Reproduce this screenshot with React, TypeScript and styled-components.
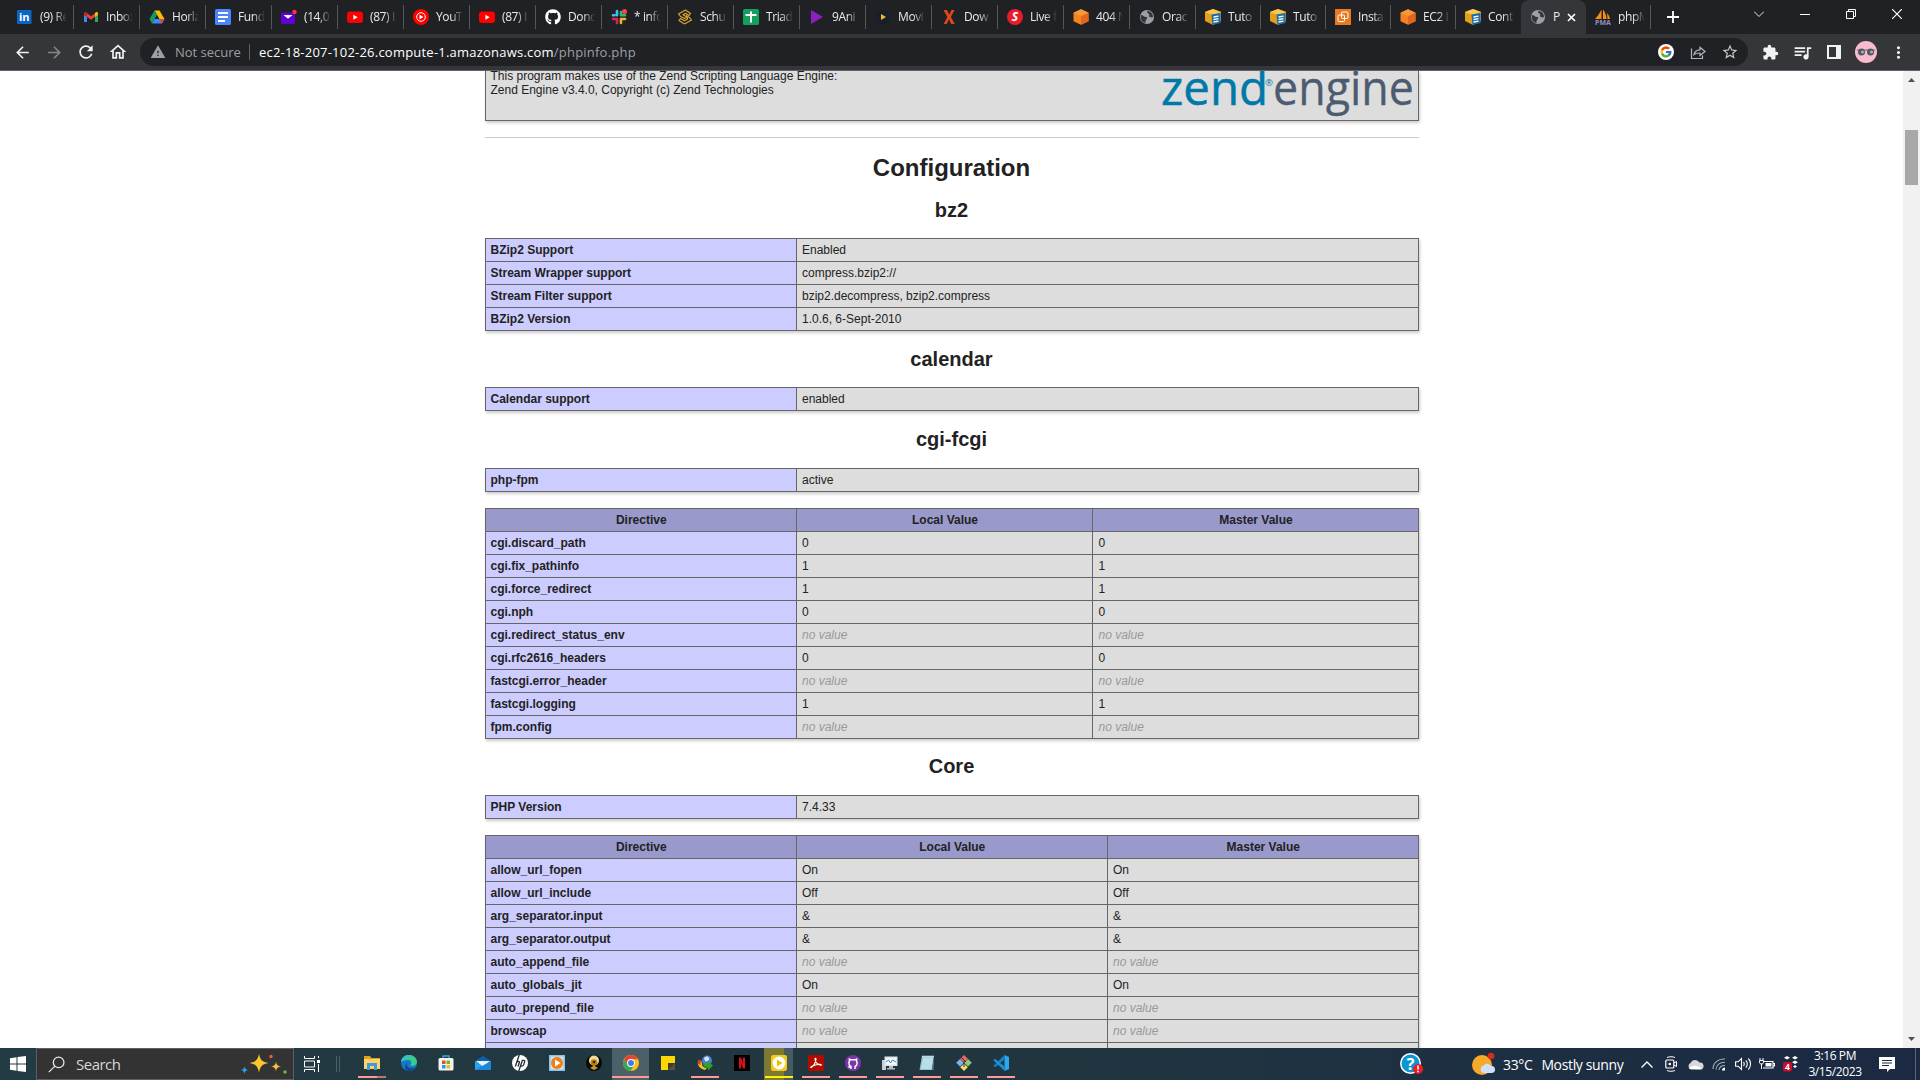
import React from "react";
import styled, { createGlobalStyle } from "styled-components";
import { FaGithub } from "react-icons/fa";
import { FcGoogle } from "react-icons/fc";
import {
  MdArrowBack,
  MdArrowForward,
  MdExtension,
  MdMoreVert,
  MdOutlineHome,
  MdQueueMusic,
  MdRefresh,
  MdStarBorder,
  MdWarning,
} from "react-icons/md";

const uiFont = `"Segoe UI", "Open Sans", "Noto Sans", sans-serif`;

const GlobalStyle = createGlobalStyle`
  * { box-sizing: border-box; }
  body { margin: 0; background: #fff; overflow: hidden; }
`;

const Screen = styled.div`
  width: 1920px;
  height: 1080px;
  display: flex;
  flex-direction: column;
  overflow: hidden;
`;

/* ---------- browser chrome ---------- */

const TabStrip = styled.header`
  height: 34px;
  flex: none;
  background: #202124;
  display: flex;
  padding-left: 8px;
  font-family: ${uiFont};
`;

const Tab = styled.div<{ $active?: boolean; $w: number }>`
  width: ${(p) => p.$w}px;
  height: 34px;
  flex: none;
  display: flex;
  align-items: center;
  padding-left: 9px;
  border-radius: 8px 8px 0 0;
  background: ${(p) => (p.$active ? "#35363a" : "transparent")};
`;

const Favicon = styled.span`
  width: 16px;
  height: 16px;
  flex: none;
  display: flex;
  svg { width: 16px; height: 16px; }
`;

const TabTitle = styled.span<{ $short?: boolean }>`
  width: ${(p) => (p.$short ? "7px" : "27px")};
  margin-left: 7px;
  overflow: hidden;
  white-space: pre;
  font-size: 12px;
  line-height: 20px;
  letter-spacing: -0.4px;
  color: #e8eaed;
  mask-image: ${(p) =>
    p.$short ? "none" : "linear-gradient(90deg, #000 55%, transparent 100%)"};
`;

const TabDivider = styled.span`
  width: 1px;
  height: 24px;
  margin-left: auto;
  background: #55575b;
`;

const TabClose = styled.span`
  display: flex;
  margin-left: 7px;
`;

const NewTab = styled.div`
  width: 44px;
  display: flex;
  align-items: center;
  justify-content: center;
`;

const WindowControls = styled.div`
  margin-left: auto;
  display: flex;
  height: 28px;
`;

const WindowButton = styled.div`
  width: 46px;
  display: flex;
  align-items: center;
  justify-content: center;
`;

const Toolbar = styled.div`
  height: 37px;
  flex: none;
  display: flex;
  align-items: center;
  background: #35363a;
  border-bottom: 1px solid #655f68;
  padding: 0 6px;
  font-family: ${uiFont};
`;

const ToolButton = styled.span<{ $dim?: boolean }>`
  width: 32px;
  height: 28px;
  flex: none;
  display: flex;
  align-items: center;
  justify-content: center;
  color: ${(p) => (p.$dim ? "#85878b" : "#f1f3f4")};
`;

const AddressBar = styled.div`
  width: 1608px;
  height: 28px;
  margin-left: 6px;
  flex: none;
  display: flex;
  align-items: center;
  border-radius: 14px;
  background: #202124;
  padding-left: 10px;
  padding-right: 2px;
`;

const Insecure = styled.span`
  display: flex;
  align-items: center;
  gap: 9px;
  width: 99px;
  font-size: 13px;
  letter-spacing: -0.02px;
  color: #9aa0a6;
  white-space: nowrap;
`;

const AddressDivider = styled.span`
  width: 1px;
  height: 16px;
  background: #5f6368;
`;

const Url = styled.span`
  margin-left: 9px;
  font-size: 13px;
  letter-spacing: 0.22px;
  color: #fff;
  white-space: nowrap;
`;

const UrlPath = styled.span`
  color: #9aa0a6;
`;

const AddressActions = styled.span`
  display: flex;
  margin-left: auto;
`;

const ExtensionRow = styled.div`
  display: flex;
  margin-left: 6px;
`;

const Profile = styled(ToolButton)`
  svg { width: 22px; height: 22px; }
`;

/* ---------- phpinfo page ---------- */

const Viewport = styled.div`
  height: 977px;
  flex: none;
  display: flex;
  overflow: hidden;
  background: #fff;
`;

const Page = styled.main`
  width: 1903px;
  display: flex;
  flex-direction: column;
  align-items: center;
  font-family: "Liberation Sans", Arial, sans-serif;
  color: #222;
`;

const EngineBox = styled.section`
  width: 934px;
  height: 50px;
  flex: none;
  display: flex;
  justify-content: space-between;
  padding: 0 2px 0 5px;
  background: #ddd;
  border: 1px solid #666;
  border-top: 0;
  box-shadow: 1px 2px 3px #ccc;
  overflow: hidden;
`;

const EngineText = styled.p`
  margin: -2px 0 0;
  font-size: 12px;
  line-height: 14px;
`;

const Rule = styled.hr`
  width: 934px;
  height: 1px;
  flex: none;
  margin: 16px 0 0;
  border: 0;
  background: #ccc;
`;

const Title = styled.h1`
  margin: 16px 0 0;
  font-size: 24px;
  line-height: 28px;
  font-weight: 700;
`;

const SectionTitle = styled.h2`
  margin: 16.6px 0;
  font-size: 20px;
  line-height: 23px;
  font-weight: 700;
`;

const Table = styled.table<{ $gap?: boolean }>`
  width: 934px;
  flex: none;
  margin-top: ${(p) => (p.$gap ? "16px" : "0")};
  table-layout: fixed;
  border-collapse: collapse;
  box-shadow: 1px 2px 3px #ccc;
`;

const Col = styled.col<{ $w?: number }>`
  width: ${(p) => (p.$w ? `${p.$w}px` : "auto")};
`;

const Cell = styled.td`
  height: 23px;
  padding: 4px 4px 4px 5.5px;
  border: 1px solid #666;
  font-size: 12px;
  line-height: 14px;
  background: #ddd;
`;

const NameCell = styled(Cell)`
  padding: 4px 5px;
  background: #ccf;
  font-weight: 700;
`;

const HeadCell = styled(Cell)`
  background: #99c;
  font-weight: 700;
  text-align: center;
`;

const NoValue = styled.i`
  color: #999;
`;

const Scrollbar = styled.div`
  width: 17px;
  display: flex;
  flex-direction: column;
  align-items: center;
  justify-content: space-between;
  background: #f1f1f1;
`;

const ScrollArrow = styled.span<{ $down?: boolean }>`
  width: 17px;
  height: 17px;
  flex: none;
  display: flex;
  align-items: center;
  justify-content: center;
  transform: ${(p) => (p.$down ? "rotate(180deg)" : "none")};
`;

const ScrollThumb = styled.span`
  width: 13px;
  height: 55px;
  margin: 42px 0 auto;
  background: #a8a8a8;
`;

/* ---------- taskbar ---------- */

const Taskbar = styled.footer`
  height: 32px;
  flex: none;
  display: flex;
  background: linear-gradient(90deg, #233b43 0%, #21353f 55%, #1d2f42 78%, #1b2943 100%);
  font-family: ${uiFont};
  color: #fff;
`;

const StartButton = styled.div`
  width: 36px;
  display: flex;
  align-items: center;
  justify-content: center;
`;

const SearchBox = styled.div`
  width: 258px;
  display: flex;
  align-items: center;
  padding: 0 5px 0 11px;
  background: #333;
  border: 1px solid #625d5f;
  color: #d6d6d6;
  font-size: 15px;
  letter-spacing: -0.5px;
`;

const SearchLabel = styled.span`
  margin-left: 11px;
  margin-right: auto;
`;

const TaskView = styled.div`
  width: 36px;
  display: flex;
  align-items: center;
  justify-content: center;
`;

const Grip = styled.div`
  width: 4px;
  height: 16px;
  margin: 8px 13px 0 6px;
  border: solid #4c6067;
  border-width: 0 1px;
`;

type RunState = "none" | "open" | "stacked" | "focused" | "alert";

const AppSlot = styled.div<{ $state: RunState }>`
  width: 37px;
  height: 32px;
  flex: none;
  display: flex;
  flex-direction: column;
  align-items: center;
  justify-content: space-between;
  padding: 7px 0 2px;
  background: ${(p) =>
    p.$state === "focused"
      ? "#4c6067"
      : p.$state === "alert"
      ? "linear-gradient(90deg, transparent 4px, #7c7935 4px 24px, #465a60 24px 33px, transparent 33px)"
      : "transparent"};
  svg { width: 16px; height: 16px; }
`;

const RunMark = styled.span<{ $state: RunState }>`
  width: ${(p) => (p.$state === "focused" ? "37px" : "28px")};
  height: 2px;
  background: ${(p) =>
    ({
      none: "transparent",
      open: "#ff9a98",
      focused: "#ff9a98",
      alert: "#fff100",
      stacked: "linear-gradient(90deg, #ff9a98 19px, #b97778 19px)",
    }[p.$state])};
`;

const Tray = styled.div`
  margin-left: auto;
  display: flex;
`;

const TrayItem = styled.span<{ $w: number }>`
  width: ${(p) => p.$w}px;
  display: flex;
  align-items: center;
  justify-content: center;
`;

const Weather = styled.span`
  display: flex;
  align-items: center;
  gap: 9px;
  width: 132px;
  margin-left: 8px;
  font-size: 14px;
  letter-spacing: -0.36px;
  white-space: nowrap;
`;

const Clock = styled.span`
  width: 64px;
  display: flex;
  flex-direction: column;
  align-items: center;
  font-size: 12px;
  line-height: 16px;
  letter-spacing: -0.4px;
  white-space: nowrap;
`;

const ShowDesktop = styled.span`
  width: 5px;
  border-left: 1px solid #596477;
`;

/* ---------- drawings ---------- */

const Svg = ({ children, w = 16, h = 16, box = "0 0 16 16" }: any) => (
  <svg width={w} height={h} viewBox={box} fill="none">
    {children}
  </svg>
);

const ui = { fontFamily: "Open Sans, sans-serif", fontWeight: 700 };

const icons: Record<string, React.ReactNode> = {
  linkedin: (
    <Svg>
      <rect x="0" y="1" width="14.500" height="14" rx="1" fill="#0a66c2" />
      <text x="7.200" y="12.200" fontSize="11" textAnchor="middle" fill="#fff" {...ui}>in</text>
    </Svg>
  ),
  gmail: (
    <Svg>
      <path d="M1 4v9h3V6z" fill="#4285f4" />
      <path d="M15 4v9h-3V6z" fill="#34a853" />
      <path d="M1 4l1.500-1L8 7.200 13.500 3 15 4v1.500L8 10.800 1 5.500z" fill="#ea4335" />
      <path d="M12 4l1.600-1.200L15 4v2l-3 2z" fill="#fbbc04" />
      <path d="M1 4l1.300-1.200L4 4v4L1 6z" fill="#c5221f" />
    </Svg>
  ),
  drive: (
    <Svg>
      <path d="M5.500 1.500h5l5 8.500h-5z" fill="#fbbc04" />
      <path d="M5.500 1.500L8 5.800 3 14.500.5 10z" fill="#0f9d58" />
      <path d="M5.500 10h10L13 14.500H3z" fill="#4285f4" />
      <path d="M10.500 10h5L13 14.500z" fill="#ea4335" />
    </Svg>
  ),
  docs: (
    <Svg>
      <rect width="16" height="16" rx="1.500" fill="#4a86f7" />
      <path d="M3 4h10M3 8h10M3 12h7" stroke="#fff" strokeWidth="1.800" />
    </Svg>
  ),
  yahoo: (
    <Svg>
      <rect x="0" y="3.500" width="14" height="11.500" rx="1" fill="#6001d2" />
      <path d="M2.500 6h9L7 9.800z" fill="#fff" />
      <circle cx="13.500" cy="3" r="2.200" fill="#f33" />
    </Svg>
  ),
  youtube: (
    <Svg>
      <rect y="2.500" width="16" height="11.500" rx="3" fill="#f00" />
      <path d="M6.400 5.700v5l4.300-2.500z" fill="#fff" />
    </Svg>
  ),
  ytmusic: (
    <Svg>
      <circle cx="8" cy="8" r="8" fill="#f00" />
      <circle cx="8" cy="8" r="4.300" stroke="#fff" />
      <path d="M6.500 5.600v4.800L10.400 8z" fill="#fff" />
    </Svg>
  ),
  github: <FaGithub color="#fff" />,
  slack: (
    <Svg>
      <g strokeWidth="2.600" strokeLinecap="round">
        <path d="M6 2v4.300M2 6.300h1.500" stroke="#36c5f0" />
        <path d="M10 6.300V3M10 6.300h4" stroke="#2eb67d" />
        <path d="M2 10h4M6 10v4" stroke="#e01e5a" />
        <path d="M10 10h4M10 10v4" stroke="#ecb22e" />
      </g>
      <circle cx="13.500" cy="2.500" r="2.500" fill="#f44" />
    </Svg>
  ),
  schu: (
    <Svg>
      <g stroke="#d9a82a" strokeWidth="1.200" strokeLinejoin="round">
        <path d="M8.500 1L1.500 5l2 2.500 4 2L10 8 6 5.800l2.500-1.500L12 6.500l1.500-2z" />
        <path d="M7.500 15l7-4-2-2.500-3.500-2" />
        <path d="M10 8l.5 2-3 1.800L3.500 9.500 2 11.500 7.500 15" />
      </g>
    </Svg>
  ),
  sheets: (
    <Svg>
      <rect width="16" height="16" rx="1.500" fill="#12a05c" />
      <path d="M2.500 6h11M8 2.500v11" stroke="#fff" strokeWidth="2" />
    </Svg>
  ),
  anime: (
    <Svg>
      <path d="M2 1v14l12-7z" fill="#8b1fc0" />
    </Svg>
  ),
  movie: (
    <Svg>
      <circle cx="8" cy="8" r="7" fill="#14202e" />
      <path d="M6 5v6l5-3z" fill="#fbb91b" />
    </Svg>
  ),
  xdown: (
    <Svg>
      <path d="M2.500 1H6l2.200 4.800L10.500 1h3L9.800 8l4 7h-3.600L8 10.300 5.700 15h-3L6.400 8z" fill="#e2491a" />
    </Svg>
  ),
  live: (
    <Svg>
      <circle cx="8" cy="8" r="8" fill="#e81c2a" />
      <text x="8" y="12.400" fontSize="12" fontStyle="italic" textAnchor="middle" fill="#fff" {...ui}>S</text>
    </Svg>
  ),
  cube: (
    <Svg>
      <path d="M8 .3l7.500 3.500v8.500l-7.500 3.500-7.500-3.500V3.800z" fill="#f58220" />
      <path d="M8 .3l7.500 3.500L8 7.200.5 3.800z" fill="#f9973a" />
      <path d="M8 7.200l7.500-3.400v8.500l-7.500 3.500z" fill="#e2661c" />
    </Svg>
  ),
  globe: (
    <Svg>
      <circle cx="8" cy="8" r="7" fill="#9aa0a6" />
      <path d="M2 6c2 0 3 2 5 2s1 2 0 3 0 3-1 3C3 13 1 10 2 6zM8 2c0 2 1 2 2 3s-1 2 1 3 3 0 3 0c0-3-2-6-6-6z" fill="#33353a" />
    </Svg>
  ),
  aws: (
    <Svg>
      <path d="M8 0l8 3v9l-8 4-8-4V3z" fill="#e59d1e" />
      <path d="M8 0l8 3-8 3-8-3z" fill="#f9c853" />
      <path d="M6.500 5.500L15.500 4v10l-8 2z" fill="#1b6ea5" />
      <path d="M8.500 8l5-.8M8.500 10.500l5-.8M8.500 13l5-.8" stroke="#fff" strokeWidth="1.300" />
    </Svg>
  ),
  insta: (
    <Svg>
      <rect width="16" height="16" fill="#e8791d" />
      <rect x="3" y="6" width="6.500" height="6.500" rx="1" stroke="#fff" />
      <rect x="6.500" y="3" width="6.500" height="6.500" rx="1" stroke="#fff" />
    </Svg>
  ),
  pma: (
    <Svg>
      <path d="M6.500.5v9.500H0C2.500 7.500 4.500 4.500 6.500.5zM8 .5c2 2.500 3.500 6 3.500 9.500H8zM12 4c2 2 2.500 4 3 6h-2.500z" fill="#f29111" />
      <text x="8" y="15.800" fontSize="7" textAnchor="middle" fill="#8d91c4" {...ui}>PMA</text>
    </Svg>
  ),
};

const tabs: [string, string][] = [
  ["linkedin", "(9) Re"],
  ["gmail", "Inbox"],
  ["drive", "Horla"],
  ["docs", "Fund"],
  ["yahoo", "(14,0"],
  ["youtube", "(87) I"],
  ["ytmusic", "YouT"],
  ["youtube", "(87) I"],
  ["github", "Donc"],
  ["slack", "* info"],
  ["schu", "Schu"],
  ["sheets", "Triad"],
  ["anime", "9Ani"],
  ["movie", "Movi"],
  ["xdown", "Dow"],
  ["live", "Live f"],
  ["cube", "404 N"],
  ["globe", "Orac"],
  ["aws", "Tuto"],
  ["aws", "Tuto"],
  ["insta", "Insta"],
  ["cube", "EC2 I"],
  ["aws", "Cont"],
  ["globe", "P"],
  ["pma", "phpM"],
];

const ACTIVE_TAB = 23;
/* The strip shares its width in whole pixels: the leading tabs get one more. */
const WIDE_TABS = 18;

const apps: { name: string; state: RunState; icon: React.ReactNode }[] = [
  {
    name: "explorer",
    state: "stacked",
    icon: (
      <Svg>
        <path d="M0 1h6l1.500 2H16v11H0z" fill="#e1a01a" />
        <path d="M0 4h16v10H0z" fill="#fbd566" />
        <path d="M3 15V8h10v7h-3v-4H6v4z" fill="#3f9be0" />
      </Svg>
    ),
  },
  {
    name: "edge",
    state: "none",
    icon: (
      <Svg>
        <circle cx="8" cy="8" r="8" fill="#1579c9" />
        <path d="M0 7C1 2 4 0 8 0c5 0 8 3.500 8 7 0 2-2 4-4.500 4-2 0-2.500-1-1.500-2 1-2-.5-4-3-4-3 0-6 1-7 2z" fill="#3cc98e" />
        <path d="M0 7C1 2 4 0 8 0c2 0 3 1 3 2-3-1-8 0-11 5z" fill="#35b8e6" />
        <path d="M6 8c-1 4 2 6 8 5-2 2.500-5 3-7 3-3-1-4-5-1-8z" fill="#10468f" />
      </Svg>
    ),
  },
  {
    name: "store",
    state: "none",
    icon: (
      <Svg>
        <path d="M5 4V1h6v3" stroke="#38a9dd" strokeWidth="1.300" />
        <rect x=".5" y="3" width="15" height="12.500" rx="1.500" fill="#f3f3f3" />
        <path d="M4 5.500h3.500V9H4z" fill="#e84b22" />
        <path d="M8.500 5.500H12V9H8.500z" fill="#78b825" />
        <path d="M4 10h3.500v3.500H4z" fill="#1fa0e4" />
        <path d="M8.500 10H12v3.500H8.500z" fill="#fcb813" />
      </Svg>
    ),
  },
  {
    name: "mail",
    state: "none",
    icon: (
      <Svg>
        <path d="M0 6l8-5 8 5v9H0z" fill="#0f5fb0" />
        <path d="M1 6h14l-7 6z" fill="#e9f3fb" />
        <path d="M0 6l8 5.500L16 6v9H0z" fill="#2aa5ee" />
        <path d="M0 15L16 6v9z" fill="#1c86da" />
      </Svg>
    ),
  },
  {
    name: "hp",
    state: "none",
    icon: (
      <Svg>
        <circle cx="8" cy="8" r="8" fill="#fff" />
        <path d="M7.200 0L3.300 11.500M4.800 7.200c1.500-1.500 3-1 2.400.8L6 11.500M10.500 5L6.800 16M10.300 5.300h1.400c1 0 1.200.7.900 1.600l-1 3c-.3.9-.9 1.300-1.700 1.300H8.600" stroke="#1b2c33" strokeWidth="1.300" />
      </Svg>
    ),
  },
  {
    name: "media",
    state: "none",
    icon: (
      <Svg>
        <rect width="16" height="16" fill="#8dc2e8" />
        <rect x="1.500" y="1.500" width="13" height="13" fill="#cfe4f3" />
        <circle cx="8" cy="8" r="6" fill="#f28011" />
        <path d="M6 4.500v7L11.500 8z" fill="#fff" />
      </Svg>
    ),
  },
  {
    name: "gold",
    state: "none",
    icon: (
      <Svg>
        <circle cx="8" cy="8" r="8" fill="#0a0a0a" />
        <ellipse cx="8" cy="5.500" rx="5" ry="5" fill="#f0dc9a" />
        <circle cx="8" cy="7.500" r="3.300" fill="#b9820f" />
        <circle cx="8" cy="7" r="1.300" fill="#4b1a04" />
        <path d="M4 13l4-2.500 4 2.500-4 2z" fill="#c8962b" />
      </Svg>
    ),
  },
  {
    name: "chrome",
    state: "focused",
    icon: (
      <Svg>
        <circle cx="8" cy="8" r="8" fill="#fbc116" />
        <path d="M1.100 4A8 8 0 0 1 15 4.200H8A4 4 0 0 0 4.500 10z" fill="#ea4335" />
        <path d="M1.100 4A8 8 0 0 0 7.500 16L11.300 10A4 4 0 0 1 4.500 10z" fill="#34a853" />
        <circle cx="8" cy="8" r="3.900" fill="#fff" />
        <circle cx="8" cy="8" r="3" fill="#3b7ded" />
      </Svg>
    ),
  },
  {
    name: "sticky",
    state: "none",
    icon: (
      <Svg>
        <path d="M1 1h14v14H1z" fill="#fcd800" />
        <path d="M8 15V8h7v7z" fill="#3a3b39" />
        <path d="M8 15l7-7v7z" fill="#57503a" />
      </Svg>
    ),
  },
  {
    name: "idm",
    state: "open",
    icon: (
      <Svg>
        <circle cx="10" cy="5.500" r="5" fill="#4a7fd0" />
        <path d="M7 3c2-2 4-2 5 0s-2 4-4 3z" fill="#d8e6f6" />
        <path d="M1 6c2-2 4 0 4 3 0 2 2 4 5 4l-2 2C3 14 0 10 1 6z" fill="#e9c52c" />
        <path d="M1 6c1-1 3-1 4 0-2 1-2 2-1 4-3-1-4-2-3-4z" fill="#d23a2a" />
        <path d="M6 9l5-1V6.500l5 4-5 5V13c-2 0-4-1-5-4z" fill="#2fa51d" />
      </Svg>
    ),
  },
  {
    name: "netflix",
    state: "none",
    icon: (
      <Svg>
        <rect width="16" height="16" fill="#000" />
        <path d="M5 2.500h2l2 6v-6h2v11H9l-2-5.500v5.500H5z" fill="#d8121c" />
      </Svg>
    ),
  },
  {
    name: "player",
    state: "alert",
    icon: (
      <Svg>
        <rect width="16" height="16" rx="2" fill="#f2ca18" />
        <circle cx="8" cy="8" r="6.400" fill="#fff" />
        <path d="M6 4.500v7L11.500 8z" fill="#f0c000" />
      </Svg>
    ),
  },
  {
    name: "acrobat",
    state: "open",
    icon: (
      <Svg>
        <rect width="16" height="16" rx="2" fill="#b30b00" />
        <path d="M3 12.500c2-.5 5-5 5-8.500 0-1-1-1-1 0 0 3 3 6 5.500 6.300 1 .2 1-1 0-1-3-.3-6 .9-8.500 2-1.200.6-1.800 1.500-1 1.200z" stroke="#fff" strokeWidth="1.100" />
      </Svg>
    ),
  },
  {
    name: "github",
    state: "open",
    icon: (
      <Svg>
        <circle cx="8" cy="8" r="8" fill="#7a35a8" />
        <path d="M6 14v-2.500C3.500 10.500 3.500 7.500 4.500 6L4.300 4l2 .8h3.400l2-.8-.2 2c1 1.500 1 4.500-1.500 5.500V14M6 12.500c-1.500.4-2-.8-2.700-1" stroke="#fff" strokeWidth="1.400" />
      </Svg>
    ),
  },
  {
    name: "monitor",
    state: "open",
    icon: (
      <Svg>
        <rect y="5" width="4" height="10" fill="#c9cfd2" />
        <rect x="2.500" y="1.500" width="13" height="9.500" fill="#dfe5e8" />
        <rect x="4" y="3" width="10" height="6.500" fill="#f6fbff" />
        <path d="M4 7l2.500-2 2 3 2-3 3.500 2" stroke="#2b8ac6" />
        <path d="M7 11h4v2h2v1.500H5V13h2z" fill="#b5bcc0" />
      </Svg>
    ),
  },
  {
    name: "notepad",
    state: "open",
    icon: (
      <Svg>
        <path d="M3 1h12l-2 14H.5z" fill="#8ec5d6" />
        <path d="M4 3h10l-1.500 11H2z" fill="#b8dfe8" />
        <path d="M4 .5v2M6 .5v2M8 .5v2M10 .5v2M12 .5v2M14 .5v2" stroke="#e9eef0" />
        <path d="M15 1l-.3 14H13z" fill="#5b7882" />
      </Svg>
    ),
  },
  {
    name: "git",
    state: "open",
    icon: (
      <Svg>
        <path d="M8 0l3.800 3.800L8 7.600 4.200 3.800z" fill="#f0695c" />
        <path d="M4 4l3.800 3.800L4 11.600.2 7.800z" fill="#7fb0f2" />
        <path d="M12 4l3.800 3.800-3.800 3.800-3.800-3.800z" fill="#8ccb78" />
        <path d="M8 8.400l3.800 3.800L8 16l-3.800-3.800z" fill="#f3db70" />
        <path d="M5 2l5 5M8 6v6" stroke="#23323a" />
      </Svg>
    ),
  },
  {
    name: "vscode",
    state: "open",
    icon: (
      <Svg>
        <path d="M11.500 0L16 2v12l-4.500 2z" fill="#2aa7f0" />
        <path d="M11.500 0v4.500L2 12.300.3 11z" fill="#1481cc" />
        <path d="M11.500 16v-4.500L2 3.700.3 5z" fill="#1b8fdc" />
      </Svg>
    ),
  },
];

/* ---------- page data ---------- */

const none = <NoValue>no value</NoValue>;

const bz2: [string, string][] = [
  ["BZip2 Support", "Enabled"],
  ["Stream Wrapper support", "compress.bzip2://"],
  ["Stream Filter support", "bzip2.decompress, bzip2.compress"],
  ["BZip2 Version", "1.0.6, 6-Sept-2010"],
];

const cgi: [string, string | null][] = [
  ["cgi.discard_path", "0"],
  ["cgi.fix_pathinfo", "1"],
  ["cgi.force_redirect", "1"],
  ["cgi.nph", "0"],
  ["cgi.redirect_status_env", null],
  ["cgi.rfc2616_headers", "0"],
  ["fastcgi.error_header", null],
  ["fastcgi.logging", "1"],
  ["fpm.config", null],
];

const core: [string, string | null][] = [
  ["allow_url_fopen", "On"],
  ["allow_url_include", "Off"],
  ["arg_separator.input", "&"],
  ["arg_separator.output", "&"],
  ["auto_append_file", null],
  ["auto_globals_jit", "On"],
  ["auto_prepend_file", null],
  ["browscap", null],
];

const InfoTable = ({ rows }: { rows: [string, string][] }) => (
  <Table>
    <colgroup>
      <Col $w={311} />
      <Col />
    </colgroup>
    <tbody>
      {rows.map(([k, v]) => (
        <tr key={k}>
          <NameCell>{k}</NameCell>
          <Cell>{v}</Cell>
        </tr>
      ))}
    </tbody>
  </Table>
);

const DirectiveTable = ({
  rows,
  local,
  continues,
}: {
  rows: [string, string | null][];
  local: number;
  continues?: boolean;
}) => (
  <Table $gap>
    <colgroup>
      <Col $w={311} />
      <Col $w={local} />
      <Col />
    </colgroup>
    <tbody>
      <tr>
        <HeadCell as="th">Directive</HeadCell>
        <HeadCell as="th">Local Value</HeadCell>
        <HeadCell as="th">Master Value</HeadCell>
      </tr>
      {rows.map(([k, v]) => (
        <tr key={k}>
          <NameCell>{k}</NameCell>
          <Cell>{v ?? none}</Cell>
          <Cell>{v ?? none}</Cell>
        </tr>
      ))}
      {continues && (
        <tr>
          <NameCell />
          <Cell />
          <Cell />
        </tr>
      )}
    </tbody>
  </Table>
);

const ZendLogo = () => (
  <svg width="256" height="49" viewBox="0 0 256 49">
    <g fontFamily="Open Sans, sans-serif">
      <text x="1" y="33.500" fontSize="48" fill="#0079a8" stroke="#0079a8" strokeWidth=".5" textLength="107" lengthAdjust="spacingAndGlyphs">zend</text>
      <text x="105" y="14.500" fontSize="9.500" fill="#0079a8">®</text>
      <text x="113" y="33.500" fontSize="48" fill="#4c5b70" stroke="#4c5b70" strokeWidth=".3" textLength="141" lengthAdjust="spacingAndGlyphs">engine</text>
    </g>
  </svg>
);

export default function App() {
  return (
    <Screen>
      <GlobalStyle />
      <TabStrip>
        {tabs.map(([icon, title], i) => {
          const active = i === ACTIVE_TAB;
          return (
            <Tab key={i} $active={active} $w={i < WIDE_TABS ? 66 : 65}>
              <Favicon>{icons[icon]}</Favicon>
              <TabTitle $short={active}>{title}</TabTitle>
              {active && (
                <TabClose>
                  <Svg w={9} h={9} box="0 0 9 9">
                    <path d="M1 1l7 7M8 1L1 8" stroke="#fff" strokeWidth="1.700" />
                  </Svg>
                </TabClose>
              )}
              {!active && i !== ACTIVE_TAB - 1 && <TabDivider />}
            </Tab>
          );
        })}
        <NewTab>
          <Svg w={12} h={12} box="0 0 12 12">
            <path d="M0 6h12M6 0v12" stroke="#fff" strokeWidth="1.800" />
          </Svg>
        </NewTab>
        <WindowControls>
          <WindowButton>
            <Svg w={10} h={6} box="0 0 10 6">
              <path d="M0 .5l5 5 5-5" stroke="#e4e5e7" />
            </Svg>
          </WindowButton>
          <WindowButton>
            <Svg w={10} h={1} box="0 0 10 1">
              <path d="M0 .5h10" stroke="#fff" />
            </Svg>
          </WindowButton>
          <WindowButton>
            <Svg w={10} h={10} box="0 0 10 10">
              <path d="M.5 2.500h7v7h-7zM2.500 2.500v-2h7v7h-2" stroke="#fff" />
            </Svg>
          </WindowButton>
          <WindowButton>
            <Svg w={10} h={10} box="0 0 10 10">
              <path d="M0 0l10 10M10 0L0 10" stroke="#fff" strokeWidth="1.200" />
            </Svg>
          </WindowButton>
        </WindowControls>
      </TabStrip>

      <Toolbar>
        <ToolButton><MdArrowBack size={19} /></ToolButton>
        <ToolButton $dim><MdArrowForward size={19} /></ToolButton>
        <ToolButton><MdRefresh size={20} /></ToolButton>
        <ToolButton><MdOutlineHome size={20} /></ToolButton>
        <AddressBar>
          <Insecure>
            <MdWarning size={16} />
            Not secure
          </Insecure>
          <AddressDivider />
          <Url>
            ec2-18-207-102-26.compute-1.amazonaws.com<UrlPath>/phpinfo.php</UrlPath>
          </Url>
          <AddressActions>
            <ToolButton>
              <Svg>
                <circle cx="8" cy="8" r="8" fill="#fff" />
                <FcGoogle x={1.5} y={1.5} size={13} />
              </Svg>
            </ToolButton>
            <ToolButton $dim>
              <Svg>
                <path d="M1.500 4.500v10h11v-3" stroke="#b4b7bb" strokeWidth="1.200" />
                <path d="M4 10.500c.5-3 2.500-4.500 6-4.700V3.300L15 7.500l-5 4V9c-3 0-4.500.3-6 1.500z" stroke="#b4b7bb" strokeWidth="1.200" />
              </Svg>
            </ToolButton>
            <ToolButton><MdStarBorder size={18} color="#c4c7ca" /></ToolButton>
          </AddressActions>
        </AddressBar>
        <ExtensionRow>
          <ToolButton><MdExtension size={17} /></ToolButton>
          <ToolButton><MdQueueMusic size={21} /></ToolButton>
          <ToolButton>
            <Svg w={14} h={14} box="0 0 14 14">
              <path d="M0 0h14v14H0zM2 2v10h7V2z" fillRule="evenodd" fill="#f1f3f4" />
            </Svg>
          </ToolButton>
          <Profile>
            <Svg box="0 0 22 22">
              <circle cx="11" cy="11" r="11" fill="#f8bbd0" />
              <path d="M2 9h18" stroke="#5a4a4e" strokeWidth=".8" />
              <circle cx="6.500" cy="11" r="3.500" fill="#4d5a5f" />
              <circle cx="15.500" cy="11" r="3.500" fill="#4d5a5f" />
              <circle cx="7.500" cy="11" r="1.600" fill="#9fb0b3" />
              <circle cx="16.500" cy="11" r="1.600" fill="#9fb0b3" />
            </Svg>
          </Profile>
          <ToolButton><MdMoreVert size={19} /></ToolButton>
        </ExtensionRow>
      </Toolbar>

      <Viewport>
        <Page>
          <EngineBox>
            <EngineText>
              This program makes use of the Zend Scripting Language Engine:
              <br />
              Zend Engine v3.4.0, Copyright (c) Zend Technologies
            </EngineText>
            <ZendLogo />
          </EngineBox>
          <Rule />
          <Title>Configuration</Title>
          <SectionTitle>bz2</SectionTitle>
          <InfoTable rows={bz2} />
          <SectionTitle>calendar</SectionTitle>
          <InfoTable rows={[["Calendar support", "enabled"]]} />
          <SectionTitle>cgi-fcgi</SectionTitle>
          <InfoTable rows={[["php-fpm", "active"]]} />
          <DirectiveTable rows={cgi} local={296.5} />
          <SectionTitle>Core</SectionTitle>
          <InfoTable rows={[["PHP Version", "7.4.33"]]} />
          <DirectiveTable rows={core} local={311} continues />
        </Page>
        <Scrollbar>
          <ScrollArrow>
            <Svg w={7} h={4} box="0 0 7 4"><path d="M0 4l3.500-4L7 4z" fill="#505050" /></Svg>
          </ScrollArrow>
          <ScrollThumb />
          <ScrollArrow $down>
            <Svg w={7} h={4} box="0 0 7 4"><path d="M0 4l3.500-4L7 4z" fill="#505050" /></Svg>
          </ScrollArrow>
        </Scrollbar>
      </Viewport>

      <Taskbar>
        <StartButton>
          <Svg>
            <path d="M0 2.200L6.500 1.200V7.500H0zM7.500 1L16 0v7.500H7.500zM0 8.500h6.500v6.300L0 13.800zM7.500 8.500H16V16l-8.500-1z" fill="#fff" />
          </Svg>
        </StartButton>
        <SearchBox>
          <Svg w={17} h={17}>
            <circle cx="10" cy="6" r="5" stroke="#e8e8e8" strokeWidth="1.200" />
            <path d="M6.500 9.500L.8 15.200" stroke="#e8e8e8" strokeWidth="1.200" />
          </Svg>
          <SearchLabel>Search</SearchLabel>
          <Svg w={47} h={20} box="0 0 47 20">
            <path d="M18 0c1.300 6 3.300 8 9.500 9-6.200 1-8.200 3-9.500 9.500-1.300-6.500-3.300-8.500-9.500-9.500C14.700 8 16.700 6 18 0z" fill="#fbc62b" />
            <path d="M35 7.500c.6 3.400 1.600 4.400 5 5-3.400.6-4.400 1.600-5 5-.6-3.400-1.600-4.400-5-5 3.400-.6 4.400-1.600 5-5z" fill="#f8bd3c" />
            <path d="M3.500 12c.5 2.600 1.200 3.400 3.500 4-2.300.6-3 1.400-3.500 4-.5-2.600-1.200-3.400-3.500-4 2.300-.6 3-1.400 3.500-4z" fill="#24a3e8" />
            <circle cx="30" cy="2.500" r="1.700" fill="#e8603c" />
            <circle cx="44" cy="18" r="1.700" fill="#6dbb45" />
          </Svg>
        </SearchBox>
        <TaskView>
          <Svg>
            <path d="M.5 0v2.500h10V0M.5 16v-2.500h10V16M.5 5h10v6H.5zM14.500 0v2M14.500 8v8" stroke="#fff" />
            <rect x="13" y="4" width="3" height="3" fill="#fff" />
          </Svg>
        </TaskView>
        <Grip />
        {apps.map((a) => (
          <AppSlot key={a.name} $state={a.state}>
            {a.icon}
            <RunMark $state={a.state} />
          </AppSlot>
        ))}
        <Tray>
          <TrayItem $w={24}>
            <Svg w={23} h={23} box="0 0 23 23">
              <circle cx="10.500" cy="10.500" r="10.500" fill="#fff" />
              <circle cx="10.500" cy="10.500" r="9" fill="#0a96d6" />
              <text x="10.500" y="16.500" fontSize="16" textAnchor="middle" fill="#fff" {...ui}>?</text>
              <circle cx="18" cy="16" r="5" fill="#ec1c24" />
              <path d="M18 12.500v4M18 17.800v1.500" stroke="#fff" strokeWidth="1.600" />
            </Svg>
          </TrayItem>
          <TrayItem $w={48} />
          <TrayItem $w={24}>
            <Svg w={24} h={24} box="0 0 24 24">
              <circle cx="11" cy="13" r="10" fill="#f7a928" />
              <path d="M12 21a4 4 0 0 1 .5-7.500A4.500 4.500 0 0 1 20 14a3.500 3.500 0 0 1 1 7z" fill="#cfe0fa" />
              <circle cx="20" cy="4" r="3.300" fill="#d0301f" />
            </Svg>
          </TrayItem>
          <Weather>
            <span>33°C</span>
            <span>Mostly sunny</span>
          </Weather>
          <TrayItem $w={24}>
            <Svg w={12} h={7} box="0 0 12 7"><path d="M.5 6.500L6 1l5.500 5.500" stroke="#fff" strokeWidth="1.300" /></Svg>
          </TrayItem>
          <TrayItem $w={24}>
            <Svg w={12} h={16} box="0 0 12 16">
              <path d="M2 1.500c2-1 6-1 8 0M2 14.500c2 1 6 1 8 0" stroke="#fff" />
              <rect x=".8" y="4" width="8" height="8" rx="1" stroke="#fff" strokeWidth="1.200" />
              <circle cx="4.800" cy="8" r="1.300" fill="#fff" />
              <path d="M9 7l2.500-1.500v5L9 9" stroke="#fff" />
            </Svg>
          </TrayItem>
          <TrayItem $w={24}>
            <Svg w={17} h={11} box="0 0 17 11">
              <path d="M4 10.500A3.500 3.500 0 0 1 3.500 4 5 5 0 0 1 12.500 3.500 3.500 3.500 0 0 1 13.500 10.500z" fill="#d5d9de" />
              <path d="M2 10c2-4 8-5 13 .3z" fill="#fff" />
            </Svg>
          </TrayItem>
          <TrayItem $w={24}>
            <Svg w={14} h={14} box="0 0 14 14">
              <g stroke="#aab2be" strokeWidth="1.100">
                <path d="M1 12C1 6 6 1.500 13 2M4 12.500C4 8 8 5 13 5.200M7 13C7 10.500 9.500 8.300 13 8.500" />
              </g>
              <path d="M10 13.500a3 3 0 0 1 3-3v3z" fill="#fff" />
            </Svg>
          </TrayItem>
          <TrayItem $w={24}>
            <Svg w={17} h={14} box="0 0 17 14">
              <path d="M.6 4.800h2.500L6.500 1.500v11L3.100 9.200H.6z" stroke="#fff" strokeWidth="1.100" />
              <path d="M8.500 5c1 1 1 3 0 4M10.800 3.300c2 2 2 5.400 0 7.400M13.300 1.500c3 3 3 8 0 11" stroke="#fff" strokeWidth="1.100" />
            </Svg>
          </TrayItem>
          <TrayItem $w={24}>
            <Svg w={16} h={12} box="0 0 16 12">
              <path d="M5 3.500h9v6.500H4M14.500 5.500h1v2.500h-1" stroke="#fff" strokeWidth="1.100" />
              <rect x="6.500" y="5" width="6" height="3.500" fill="#fff" />
              <path d="M1 0v2M4 0v2M.5 2.500h4v2l-1 1.500h-2l-1-1.500zM2.500 6v5" stroke="#fff" />
            </Svg>
          </TrayItem>
          <TrayItem $w={24}>
            <Svg w={16} h={16}>
              <path d="M4 0l3 1.800L4 3.600 1 1.800zM12 0l3 1.800-3 1.800-3-1.800zM12 4.500l3 1.800-3 1.800-3-1.800zM12 9l2 1.500-2 1.500-2-1.500z" fill="#fff" />
              <rect y="6" width="9" height="9.500" rx="2" fill="#c8102e" />
              <text x="4.500" y="13.800" fontSize="8.500" textAnchor="middle" fill="#fff" {...ui}>4</text>
            </Svg>
          </TrayItem>
          <Clock>
            <span>3:16 PM</span>
            <span>3/15/2023</span>
          </Clock>
          <TrayItem $w={40}>
            <Svg>
              <path d="M0 1h16v12h-5l-3 3v-3H0z" fill="#fff" />
              <path d="M3 4.500h10M3 7h10M3 9.500h7" stroke="#1b2943" />
            </Svg>
          </TrayItem>
          <TrayItem $w={8} />
          <ShowDesktop />
        </Tray>
      </Taskbar>
    </Screen>
  );
}
